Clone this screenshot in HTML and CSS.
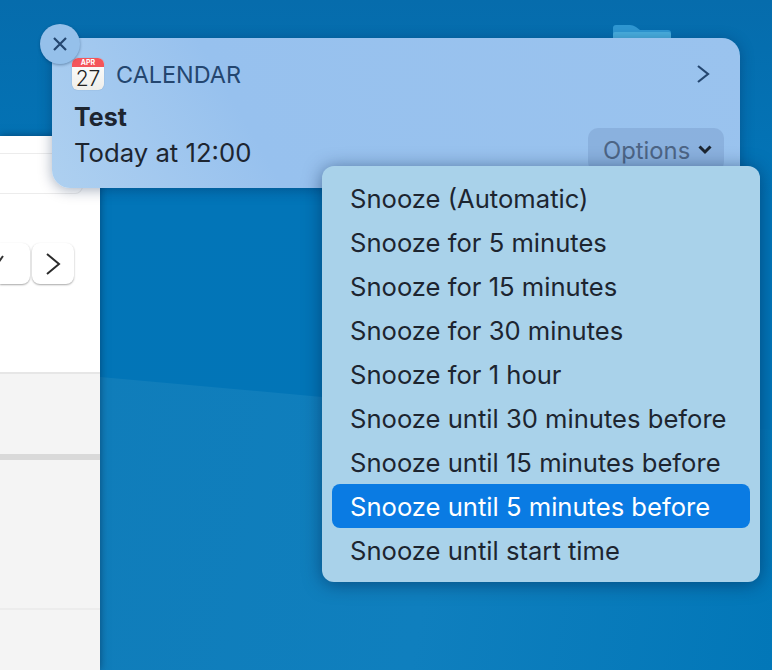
FILE: index.html
```html
<!DOCTYPE html>
<html>
<head>
	<meta charset="utf-8">
	<title>Calendar notification</title>
	<link rel="stylesheet" href="styles.css">
</head>
<body>

<div class="desktop">
	<div class="wave"></div>

	<svg class="folder" width="60" height="20" viewBox="0 0 60 20">
		<path d="M1 20V4Q1 1 4 1H18Q21 1 24 3L28 6H56Q59 6 59 9V20Z" fill="#2f97d2"/>
		<path d="M1 20V10Q1 8 3 8H57Q59 8 59 10V20Z" fill="#49aede"/>
	</svg>

	<div class="appwindow">
		<div class="searchbox"></div>
		<div class="navbtns">
			<div class="navbtn prev">
				<svg width="12" height="12" viewBox="0 0 12 12"><path d="M1 1L6 8L11 1" fill="none" stroke="#333" stroke-width="2"/></svg>
			</div>
			<div class="navbtn next">
				<svg width="16" height="24" viewBox="0 0 16 24"><path d="M2 2L14 12L2 22" fill="none" stroke="#2b2b2b" stroke-width="2"/></svg>
			</div>
		</div>
		<div class="lower">
			<div class="band"></div>
			<div class="rule"></div>
		</div>
	</div>

	<div class="banner">
		<div class="head">
			<div class="calicon">
				<div class="calmonth">APR</div>
				<div class="calday">27</div>
			</div>
			<span class="appname">CALENDAR</span>
			<svg class="chev" width="14" height="20" viewBox="0 0 14 20"><path d="M2 2L12 10L2 18" fill="none" stroke="#24466f" stroke-width="2.2"/></svg>
		</div>
		<div class="foot">
			<div class="body">
				<div class="title">Test</div>
				<div class="when">Today at 12:00</div>
			</div>
			<div class="options">
				Options
				<svg width="14" height="10" viewBox="0 0 14 10"><path d="M1.5 1.5L7 7L12.5 1.5" fill="none" stroke="#1c2530" stroke-width="3"/></svg>
			</div>
		</div>
	</div>

	<div class="closebtn">
		<svg width="16" height="16" viewBox="0 0 16 16"><path d="M2 2L14 14M14 2L2 14" stroke="#24466f" stroke-width="2.2"/></svg>
	</div>

	<ul class="menu">
		<li>Snooze (Automatic)</li>
		<li>Snooze for 5 minutes</li>
		<li>Snooze for 15 minutes</li>
		<li>Snooze for 30 minutes</li>
		<li>Snooze for 1 hour</li>
		<li>Snooze until 30 minutes before</li>
		<li>Snooze until 15 minutes before</li>
		<li class="active">Snooze until 5 minutes before</li>
		<li>Snooze until start time</li>
	</ul>
</div>

</body>
</html>
```

FILE: styles.css
```css
html, body {
	margin: 0;
	padding: 0;
}
body {
	font-family: Inter, "Noto Sans", sans-serif;
	color: #1d2530;
}

.desktop {
	position: relative;
	width: 772px;
	height: 670px;
	overflow: hidden;
	background: linear-gradient(180deg, #066cac 0%, #0275b8 30%, #0275b6 100%);
}
.wave {
	position: absolute;
	left: 100px;
	top: 370px;
	width: 672px;
	height: 300px;
	background: linear-gradient(100deg, #107dba 0%, #0f7fbe 50%, #0277b8 100%);
	clip-path: polygon(0 7px, 222px 27px, 672px 60px, 100% 100%, 0 100%);
}

.folder {
	position: absolute;
	left: 612px;
	top: 24px;
}

/* window behind the notification */
.appwindow {
	position: absolute;
	left: 0;
	top: 136px;
	width: 100px;
	height: 534px;
	background: #fff;
	box-shadow: 0 0 8px rgba(0, 30, 60, .55);
}
.searchbox {
	width: 83px;
	height: 41px;
	margin-top: 17px;
	box-sizing: border-box;
	border: 1px solid #ececec;
	border-left: 0;
	border-radius: 0 8px 8px 0;
}
.navbtns {
	display: flex;
	gap: 2px;
	margin-top: 49px;
}
.navbtn {
	box-sizing: border-box;
	height: 41px;
	background: #fff;
	border-radius: 8px;
	box-shadow: 0 1px 2px rgba(0, 0, 0, .35);
	display: flex;
	align-items: center;
	justify-content: center;
}
.navbtn.prev {
	width: 30px;
	border-radius: 0 8px 8px 0;
	overflow: hidden;
	justify-content: flex-start;
	padding-bottom: 6px;
}
.navbtn.prev svg {
	margin-left: -8px;
}
.navbtn.next {
	width: 42px;
}
.lower {
	margin-top: 88px;
	height: 298px;
	background: #f4f4f4;
	border-top: 2px solid #e6e6e6;
}
.band {
	height: 6px;
	margin-top: 80px;
	background: #d9d9d9;
}
.rule {
	height: 2px;
	margin-top: 148px;
	background: #ececec;
}

/* notification */
.banner {
	position: absolute;
	left: 52px;
	top: 38px;
	box-sizing: border-box;
	width: 688px;
	height: 150px;
	padding: 20px 16px 0 20px;
	border-radius: 18px;
	background: linear-gradient(60deg, #aed0f0 0%, #97c1ee 30%, #9ac3ee 100%);
	box-shadow: 0 2px 14px rgba(0, 30, 70, .35);
}
.head {
	display: flex;
	align-items: center;
	height: 32px;
}
.calicon {
	width: 32px;
	height: 32px;
	border-radius: 6px;
	overflow: hidden;
	background: linear-gradient(180deg, #fff, #efeeea);
	box-shadow: 0 0 1px rgba(0, 0, 0, .3);
}
.calmonth {
	height: 9px;
	background: #f4555a;
	color: #fff;
	font-size: 7px;
	font-weight: 700;
	line-height: 9px;
	text-align: center;
}
.calday {
	font-size: 21px;
	font-weight: 300;
	line-height: 23px;
	text-align: center;
	color: #222;
}
.appname {
	margin-left: 12px;
	font-size: 23.4px;
	color: #24466f;
}
.chev {
	margin-left: auto;
	margin-right: 14px;
}
.foot {
	display: flex;
	justify-content: space-between;
	align-items: flex-start;
	margin-top: 9px;
	padding-left: 2px;
}
.title {
	font-size: 25px;
	font-weight: 700;
	line-height: 36px;
}
.when {
	font-size: 25.7px;
	line-height: 36px;
}
.options {
	display: flex;
	align-items: center;
	gap: 8px;
	box-sizing: border-box;
	width: 136px;
	height: 44px;
	margin-top: 29px;
	padding-left: 15px;
	border-radius: 10px;
	background: rgba(70, 100, 150, .18);
	color: #4d6585;
	font-size: 23.8px;
}

.closebtn {
	position: absolute;
	left: 40px;
	top: 24px;
	width: 40px;
	height: 40px;
	border-radius: 50%;
	background: #95c0ea;
	box-shadow: 0 1px 3px rgba(0, 40, 80, .4);
	display: flex;
	align-items: center;
	justify-content: center;
}

/* snooze menu */
.menu {
	position: absolute;
	left: 322px;
	top: 166px;
	box-sizing: border-box;
	width: 438px;
	height: 416px;
	margin: 0;
	padding: 10px;
	list-style: none;
	border-radius: 12px;
	background: #a9d2ea;
	box-shadow: 0 2px 18px rgba(0, 30, 70, .5);
}
.menu li {
	height: 44px;
	padding-left: 18px;
	border-radius: 8px;
	font-size: 25.6px;
	line-height: 46px;
	white-space: nowrap;
}
.menu li.active {
	background: #0a7be3;
	color: #fff;
}
```
